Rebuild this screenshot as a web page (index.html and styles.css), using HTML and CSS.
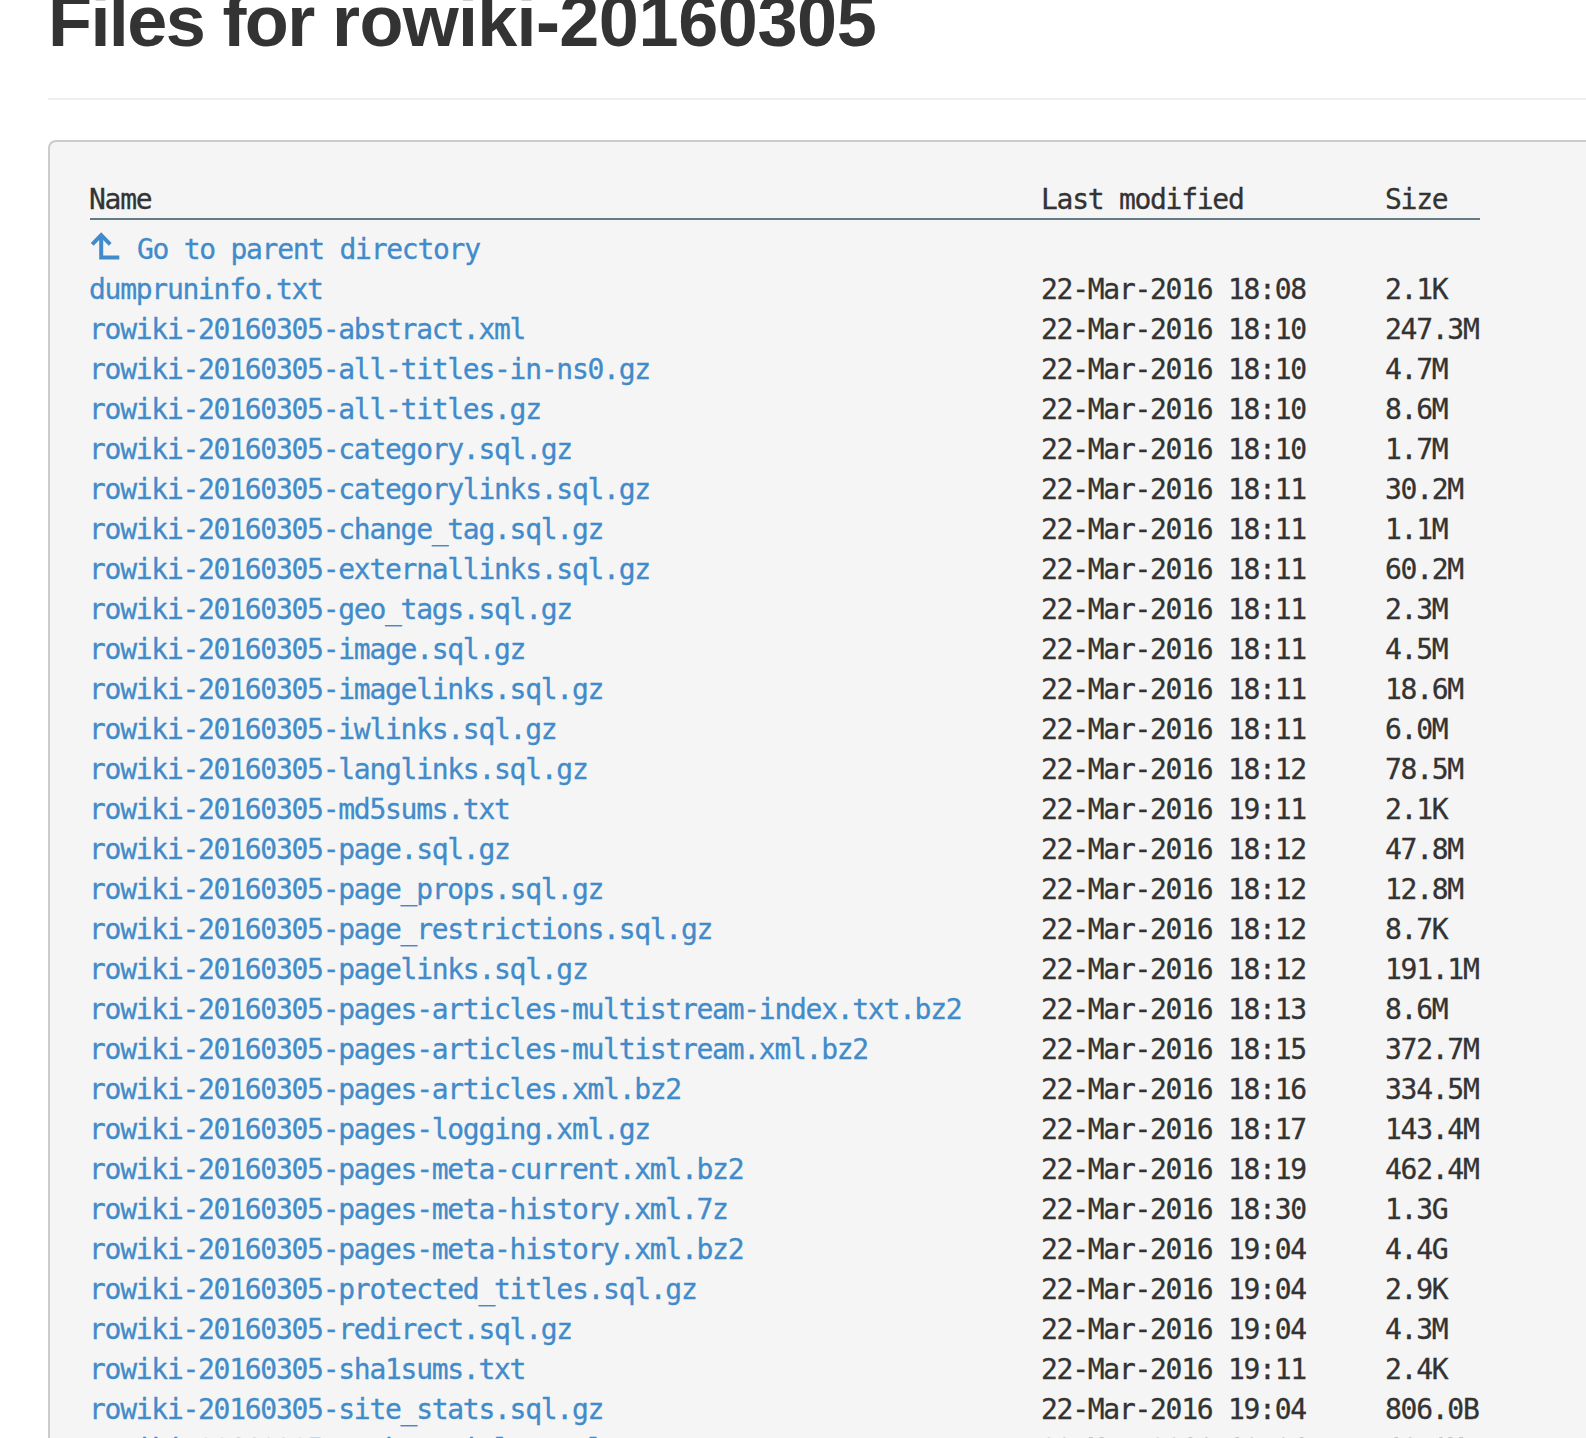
FILE: index.html
```html
<!DOCTYPE html>
<html lang="en">
<head>
<meta charset="utf-8">
<title>Files for rowiki-20160305</title>
<link rel="stylesheet" href="styles.css">
</head>
<body>
<main class="page">
<h1 class="title">Files for <span class="wiki">rowiki-</span><span class="stamp">20160305</span></h1>
<div class="panel">
<table class="listing">
<thead><tr><th class="name">Name</th><th class="date">Last modified</th><th class="size">Size</th></tr></thead>
<tbody id="files">
<tr class="parent"><td><a href="#"><svg class="up" viewBox="0 0 32 28" aria-hidden="true"><path d="M2.2 12.4 11.2 3.2 20.2 12.4M11.2 4V25.5H29.3" /></svg>Go to parent directory</a></td><td></td><td></td></tr>
</tbody>
</table>
</div>
</main>
<script src="files.js"></script>
</body>
</html>
```
FILE: styles.css
```css
body {
  margin: 0;
  background: #fff;
  color: #333;
  overflow: hidden;
}
.page {
  height: 1438px;
  padding-left: 48px;
  overflow: hidden;
}
.title {
  margin: 0;
  height: 98px;
  border-bottom: 2px solid #eee;
  font: bold 72px/42px "Liberation Sans", Arial, sans-serif;
  letter-spacing: -1.6px;
  white-space: nowrap;
}
.wiki { letter-spacing: -0.7px; }
.stamp { letter-spacing: -0.4px; }
.panel {
  margin-top: 40px;
  height: 1400px;
  padding: 38px 0 0 40px;
  border: 2px solid #ccc;
  border-right: 0;
  border-radius: 8px 0 0 0;
  background: #f5f5f5;
}
.listing {
  width: 1390px;
  table-layout: fixed;
  border-collapse: collapse;
  font: 28px/40px "DejaVu Sans Mono", monospace;
  letter-spacing: -1.28px;
  white-space: pre;
  -webkit-text-stroke: 0.3px;
}
.listing th, .listing td {
  height: 40px;
  padding: 0;
  text-align: left;
  font-weight: normal;
}
.listing th {
  height: 38px;
  line-height: 36px;
  padding-top: 2px;
  box-sizing: border-box;
  border-bottom: 2px solid #657b83;
}
.listing .name { width: 951px; }
.listing .date { width: 344px; }
.listing th:first-child, .listing td:first-child { text-indent: -1px; }
.listing .parent td {
  height: 50px;
  line-height: 40px;
  padding-top: 10px;
  box-sizing: border-box;
}
.listing .parent td:first-child { text-indent: 0; }
.listing a {
  color: #428bca;
  text-decoration: none;
}
.up {
  width: 32px;
  height: 28px;
  margin-right: 15px;
  vertical-align: -1px;
  fill: none;
  stroke: #428bca;
  stroke-width: 4;
}
```
FILE: files.js
```js
const prefix = "rowiki-20160305-";
const files = `abstract.xml 18:10 247.3M
all-titles-in-ns0.gz 18:10 4.7M
all-titles.gz 18:10 8.6M
category.sql.gz 18:10 1.7M
categorylinks.sql.gz 18:11 30.2M
change_tag.sql.gz 18:11 1.1M
externallinks.sql.gz 18:11 60.2M
geo_tags.sql.gz 18:11 2.3M
image.sql.gz 18:11 4.5M
imagelinks.sql.gz 18:11 18.6M
iwlinks.sql.gz 18:11 6.0M
langlinks.sql.gz 18:12 78.5M
md5sums.txt 19:11 2.1K
page.sql.gz 18:12 47.8M
page_props.sql.gz 18:12 12.8M
page_restrictions.sql.gz 18:12 8.7K
pagelinks.sql.gz 18:12 191.1M
pages-articles-multistream-index.txt.bz2 18:13 8.6M
pages-articles-multistream.xml.bz2 18:15 372.7M
pages-articles.xml.bz2 18:16 334.5M
pages-logging.xml.gz 18:17 143.4M
pages-meta-current.xml.bz2 18:19 462.4M
pages-meta-history.xml.7z 18:30 1.3G
pages-meta-history.xml.bz2 19:04 4.4G
protected_titles.sql.gz 19:04 2.9K
redirect.sql.gz 19:04 4.3M
sha1sums.txt 19:11 2.4K
site_stats.sql.gz 19:04 806.0B
stub-articles.xml.gz 19:04 46.1M`.split("\n").map(line => line.split(" "));

const body = document.getElementById("files");
function addRow(name, time, size) {
  const row = body.insertRow();
  const link = document.createElement("a");
  link.href = "#";
  link.textContent = name;
  row.insertCell().append(link);
  row.insertCell().textContent = "22-Mar-2016 " + time;
  row.insertCell().textContent = size;
}
addRow("dumpruninfo.txt", "18:08", "2.1K");
files.forEach(([name, time, size]) => addRow(prefix + name, time, size));
```
